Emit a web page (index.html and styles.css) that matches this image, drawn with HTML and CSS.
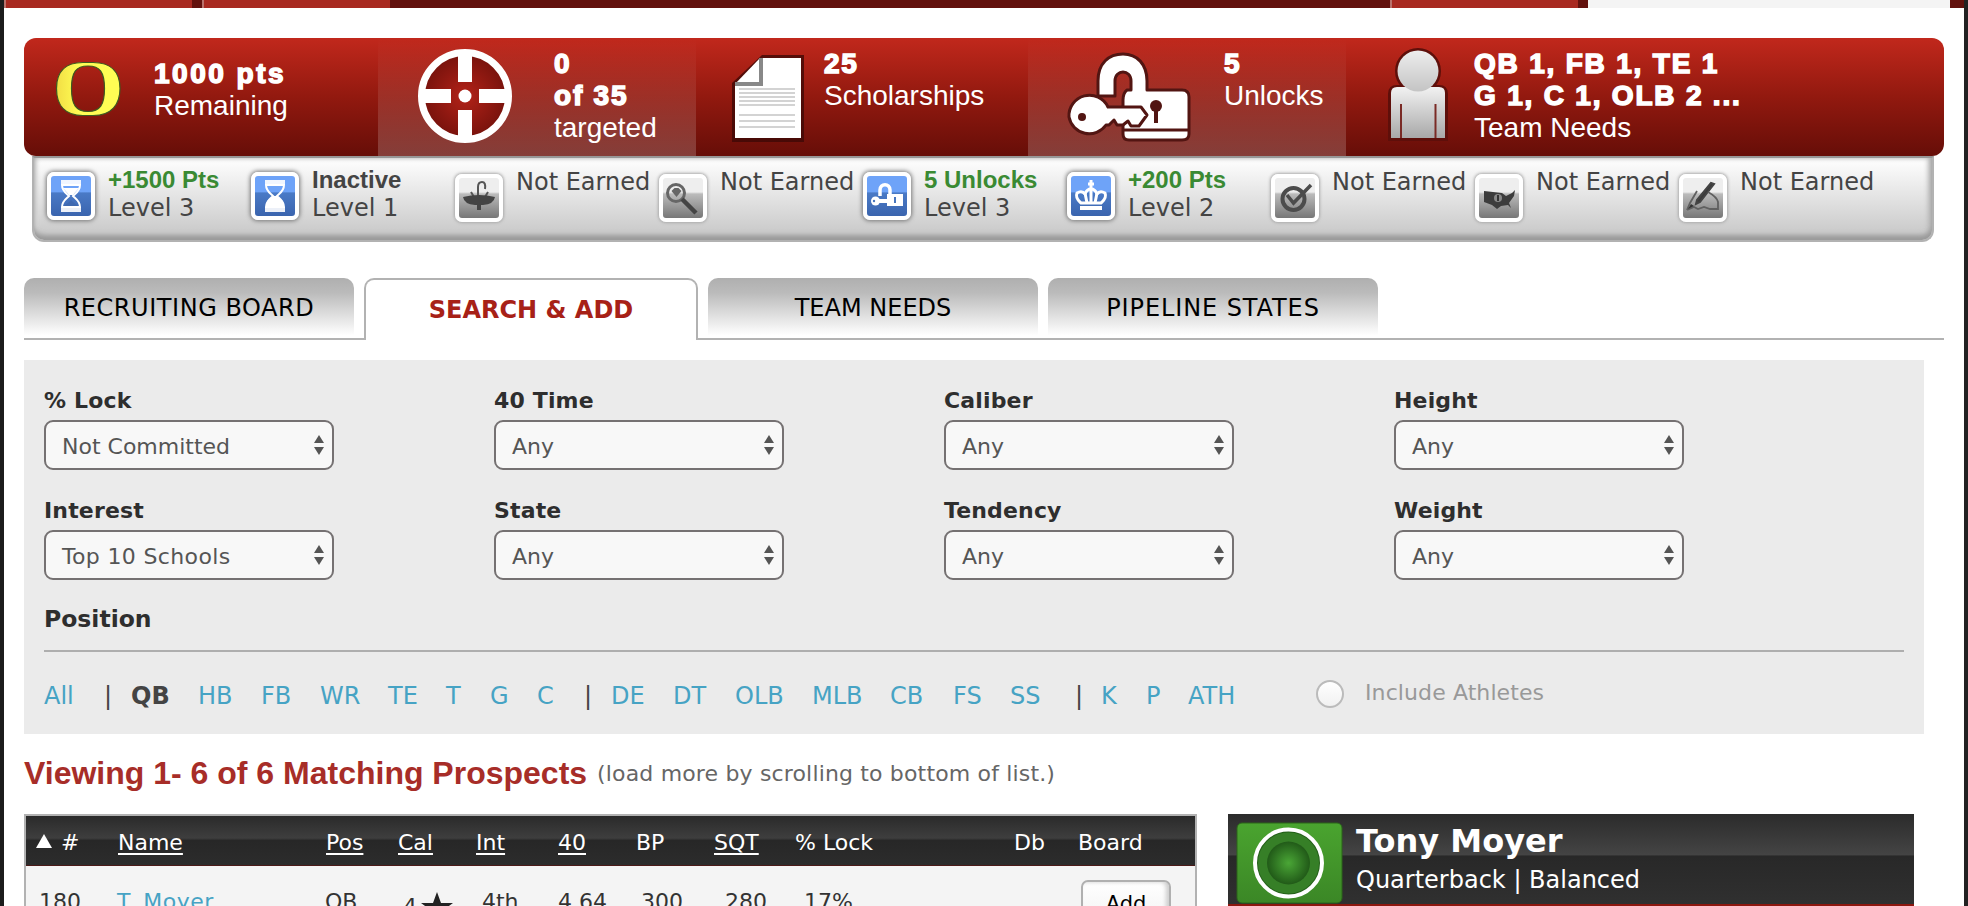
FILE: index.html
```html
<!DOCTYPE html>
<html lang="en">
<head>
<meta charset="utf-8">
<title>Recruiting</title>
<link rel="stylesheet" href="styles.css">
</head>
<body>
<svg class="defs" width="0" height="0">
  <defs>
    <linearGradient id="steel" x1="0" y1="0" x2="0" y2="1"><stop offset="0" stop-color="#f2f2f2"/><stop offset="1" stop-color="#a8a8a8"/></linearGradient>
    <linearGradient id="skin" x1="0" y1="0" x2="0" y2="1"><stop offset="0" stop-color="#ededed"/><stop offset="1" stop-color="#c4c4c4"/></linearGradient>
    <linearGradient id="yolk" x1="0" y1="0" x2="1" y2="0"><stop offset="0" stop-color="#f2de45"/><stop offset=".35" stop-color="#fffd54"/><stop offset="1" stop-color="#fffd54"/></linearGradient>
    <linearGradient id="turf" x1="0" y1="0" x2="0" y2="1"><stop offset="0" stop-color="#4aa42f"/><stop offset="1" stop-color="#3b8726"/></linearGradient>
    <radialGradient id="scope"><stop offset="0" stop-color="#b32218"/><stop offset="1" stop-color="#76120c"/></radialGradient>
    <radialGradient id="core"><stop offset="0" stop-color="#4aa636"/><stop offset="1" stop-color="#215a18"/></radialGradient>
  </defs>
</svg>
<div class="page">
  <div class="strip"><i class="s1"></i><i class="s2"></i><i class="s3"></i><i class="s4"></i></div>
  <main>
    <section class="summary">
      <div class="stat points">
        <svg class="logo" width="66" height="56" viewBox="0 0 66 56"><path fill-rule="evenodd" fill="url(#yolk)" stroke="#3d5a21" stroke-width="1.200" d="M28 1.500H38C57 1.500 65 12 65 27.500S57 54.500 38 54.500H28C9 54.500 1.500 43 1.500 27.500S9 1.500 28 1.500zM33 5C21 5 16.500 11 16.500 27.500S21 50.500 33 50.500 49.500 44 49.500 27.500 45 5 33 5z"/></svg>
        <p class="low"><b>1000 pts</b><br>Remaining</p>
      </div>
      <div class="stat light targets">
        <svg class="scope" width="98" height="98" viewBox="0 0 98 98"><circle cx="49" cy="49" r="43.500" fill="url(#scope)" stroke="#fff" stroke-width="7"/><path d="M49 5v30M49 63v30M5 49h30M63 49h30" stroke="#fff" stroke-width="14"/><circle cx="49" cy="49" r="6.500" fill="#fff"/></svg>
        <p><b>0<br>of 35</b><br>targeted</p>
      </div>
      <div class="stat grants">
        <svg class="doc" width="76" height="92" viewBox="0 0 76 92"><path d="M31 2H73V89H1V30z" fill="#3f0906" opacity=".8"/><path d="M29 5H70V85H4V31z" fill="#fff"/><path d="M30 5v26H4" fill="none" stroke="#888" stroke-width="4"/><path d="M8 36h56M8 40h56M8 44h56M8 48h56M8 52h56M8 62h56M8 68h56M8 74h56" stroke="#d3d3d3" stroke-width="2"/></svg>
        <p><b>25</b><br>Scholarships</p>
      </div>
      <div class="stat light unlocks">
        <svg class="lock" width="126" height="94" viewBox="-1 -1 126 94">
          <g fill="#fff" stroke="#521512" stroke-width="3" stroke-linejoin="round">
            <path d="M31 45V30C31 12 42 3 56 3s24 10 24 27v9h35q7 0 7 7v37q0 6-7 6H62q-6 0-6-6V49q0-7 4-10h4V30c0-12-16-12-16 0v15z"/>
            <path d="M56 79h66" fill="none"/>
            <path d="M2 66a20.500 20.500 0 0 1 39-10h33l6 8-8 11h-8l-3-5-5 4h-6l-3-5-5 5h-3A20.500 20.500 0 0 1 2 66z"/>
          </g>
          <circle cx="15" cy="66" r="4" fill="#521512"/><circle cx="89" cy="55" r="6" fill="#521512"/><path d="M89 56v16" stroke="#521512" stroke-width="4"/>
        </svg>
        <p><b>5</b><br>Unlocks</p>
      </div>
      <div class="stat needs">
        <svg class="man" width="64" height="100" viewBox="0 0 64 100"><g stroke="#5e0f0a" stroke-width="4"><path d="M4 92V47q0-7 7-7H53q7 0 7 7V92z"/><circle cx="32" cy="24" r="21"/></g><path d="M5 91V46q0-6 6-6H53q6 0 6 6V91z" fill="url(#steel)"/><path d="M15 57V91M49.500 57V91" stroke="#7a2a25" stroke-width="2"/><circle cx="32" cy="24" r="20.500" fill="url(#skin)"/></svg>
        <p><b>QB 1, FB 1, TE 1<br>G 1, C 1, OLB 2 ...</b><br>Team Needs</p>
      </div>
    </section>

    <section class="badges">
      <div class="badge on"><svg class="tile" viewBox="0 0 40 40"><path d="M10 4h20v4H10zM10 32h20v4H10z" fill="#fff" opacity=".9"/><path d="M11 9h18c0 6-4 8-7 11 3 3 7 5 7 11H11c0-6 4-8 7-11-3-3-7-5-7-11z" fill="none" stroke="#fff" stroke-width="2"/><path d="M12 12h16l-6 7h-4z" fill="#fff"/><path d="M18 26l2-2 2 2 5 4H13z" fill="#3f69b0"/></svg><p><b class="gain">+1500 Pts</b><br>Level 3</p></div>
      <div class="badge on"><svg class="tile" viewBox="0 0 40 40"><path d="M10 4h20v4H10zM10 32h20v4H10z" fill="#fff" opacity=".9"/><path d="M11 9h18c0 6-4 8-7 11 3 3 7 5 7 11H11c0-6 4-8 7-11-3-3-7-5-7-11z" fill="none" stroke="#fff" stroke-width="2"/><path d="M18 20h4l6 5v6H12v-6z" fill="#fff"/></svg><p><b>Inactive</b><br>Level 1</p></div>
      <div class="badge"><svg class="tile" viewBox="0 0 40 40"><path d="M19 20V9q0-5 4-5t3 7M12 14l3 5M29 14l-3 5" fill="none" stroke="#555" stroke-width="2"/><path d="M4 19q16-4 32 0-1 7-12 8h-2v5h-4v-5h-2Q5 26 4 19z" fill="#444"/></svg><p>Not Earned</p></div>
      <div class="badge"><svg class="tile" viewBox="0 0 40 40"><circle cx="13" cy="15" r="8.500" fill="none" stroke="#666" stroke-width="3"/><path d="M8.500 13l3-3h4l3 3-5 6z" fill="#666"/><path d="M19 21l14 14" stroke="#444" stroke-width="4.500"/></svg><p>Not Earned</p></div>
      <div class="badge on"><svg class="tile" viewBox="0 0 40 40"><path d="M13 20v-6c0-7 10-7 10 0v5" fill="none" stroke="#fff" stroke-width="3.500"/><path d="M20 18h16v12H20z" fill="#fff"/><circle cx="8.500" cy="25" r="4.500" fill="#fff"/><path d="M12 25h10" stroke="#fff" stroke-width="4"/><circle cx="7" cy="25" r="1.200" fill="#4775bd"/><path d="M28 21v6" stroke="#4775bd" stroke-width="2"/></svg><p><b class="gain">5 Unlocks</b><br>Level 3</p></div>
      <div class="badge on"><svg class="tile" viewBox="0 0 40 40"><path d="M10 27q-6-5-4-10 5-3 8 1 2-5 6-5t6 5q3-4 8-1 2 5-4 10z" fill="none" stroke="#fff" stroke-width="3"/><path d="M20 4v23M17 8h6M14 17l2 10M26 17l-2 10" stroke="#fff" stroke-width="3"/><path d="M9 30h22v4H9z" fill="#fff"/></svg><p><b class="gain">+200 Pts</b><br>Level 2</p></div>
      <div class="badge"><svg class="tile" viewBox="0 0 40 40"><circle cx="18.500" cy="21" r="11" fill="none" stroke="#4c4c4c" stroke-width="4"/><path d="M12 17l6.500 8L36 7" fill="none" stroke="#4c4c4c" stroke-width="3.500"/></svg><p>Not Earned</p></div>
      <div class="badge"><svg class="tile" viewBox="0 0 40 40"><path d="M5 13l18 2 4 3 6-3 3-3-1 6-5 7 2 5-3-3-7 1-4 3-5-4-8-3z" fill="#3c3c3c"/><circle cx="19" cy="20" r="4" fill="#888"/><path d="M19 17v6" stroke="#333" stroke-width="2"/></svg><p>Not Earned</p></div>
      <div class="badge"><svg class="tile" viewBox="0 0 40 40"><path d="M28 5L14 22l-1 4 4-2L31 6z" fill="#3a3a3a" stroke="#444" stroke-width="2"/><path d="M4 32l3-7 7-12M25 14q9 5 10 10v7h-8l-6-2-6 2-4-2-7 3" fill="none" stroke="#606060" stroke-width="1.800"/><path d="M5 31l3-5 3 2z" fill="#333"/></svg><p>Not Earned</p></div>
    </section>

    <nav class="tabs">
      <a class="tab board">RECRUITING BOARD</a><a class="tab active">SEARCH &amp; ADD</a><a class="tab">TEAM NEEDS</a><a class="tab pipeline">PIPELINE STATES</a>
    </nav>

    <section class="panel">
      <div class="filters">
        <div class="field"><label>% Lock</label><div class="select">Not Committed</div></div>
        <div class="field"><label>40 Time</label><div class="select">Any</div></div>
        <div class="field"><label>Caliber</label><div class="select">Any</div></div>
        <div class="field"><label>Height</label><div class="select">Any</div></div>
        <div class="field"><label>Interest</label><div class="select schools">Top 10 Schools</div></div>
        <div class="field"><label>State</label><div class="select">Any</div></div>
        <div class="field"><label>Tendency</label><div class="select">Any</div></div>
        <div class="field"><label>Weight</label><div class="select">Any</div></div>
      </div>
      <h3>Position</h3>
      <div class="positions">
        <a>All</a><i>|</i><b>QB</b><a>HB</a><a>FB</a><a>WR</a><a>TE</a><a>T</a><a>G</a><a>C</a><i>|</i><a>DE</a><a>DT</a><a>OLB</a><a>MLB</a><a>CB</a><a>FS</a><a>SS</a><i>|</i><a>K</a><a>P</a><a>ATH</a>
        <span class="radio"></span><span class="include">Include Athletes</span>
      </div>
    </section>

    <header class="heading"><h2>Viewing 1- 6 of 6 Matching Prospects</h2><span>(load more by scrolling to bottom of list.)</span></header>

    <div class="results">
      <div class="table">
        <div class="row head">
          <svg width="16" height="16" viewBox="0 0 16 16"><path d="M8 1l8 14H0z" fill="#fff"/></svg>
          <span>#</span><u>Name</u><u>Pos</u><u>Cal</u><u>Int</u><u>40</u><span>BP</span><u>SQT</u><span>% Lock</span><span>Db</span><span>Board</span>
        </div>
        <div class="row data">
          <span>180</span><a>T. Moyer</a><span>QB</span><span class="cal">4 <svg width="32" height="30" viewBox="0 0 32 30"><path d="M16 0l4 11h12l-9.500 7L26 29l-10-6.500L6 29l3.500-11L0 11h12z" fill="#222"/></svg></span><span>4th</span><span>4.64</span><span>300</span><span>280</span><span>17%</span><span class="add">Add</span>
        </div>
      </div>
      <aside class="player">
        <svg class="chip" width="108" height="84" viewBox="0 0 108 84"><rect x="1" y="1" width="105" height="80" rx="5" fill="url(#turf)" stroke="#2a6519" stroke-width="1"/><circle cx="52.500" cy="41" r="33.500" fill="#367f27"/><circle cx="52.500" cy="41" r="32" fill="none" stroke="#25611a" stroke-width="3"/><circle cx="52.500" cy="41" r="33.500" fill="none" stroke="#fff" stroke-width="4"/><circle cx="52.500" cy="41" r="21.500" fill="url(#core)"/></svg>
        <div><h4>Tony Moyer</h4><p>Quarterback | Balanced</p></div>
      </aside>
    </div>
  </main>
</div>
</body>
</html>
```
FILE: styles.css
```css
* { box-sizing: border-box; }
html, body { margin: 0; height: 906px; overflow: hidden; }
body { font-family: "DejaVu Sans", Verdana, sans-serif; font-size: 22px; background: #fff; color: #333; }
p, h2, h3, h4 { margin: 0; }
i { font-style: normal; }
.defs { position: absolute; }
.page { height: 906px; overflow: hidden; border-left: 4px solid #1c1c1c; border-right: 4px solid #222; }

.strip { display: flex; height: 8px; background: #62110d; }
.strip i { background: #a82920; border-left: 2px solid #b9716b; }
.strip .s1 { width: 188px; margin-right: 10px; }
.strip .s2 { width: 188px; margin-right: 1000px; }
.strip .s3 { width: 188px; margin-right: 10px; }
.strip .s4 { width: 362px; background: #f4f4f4; border: 0; }

main { padding: 30px 20px 0; }

.summary { display: grid; grid-template-columns: 354px 318px 332px 318px 598px; height: 118px; border-radius: 12px; overflow: hidden; background: linear-gradient(#c1281c, #92190f 50%, #670e08 99%); color: #fff; font-family: "Liberation Sans", Arial, sans-serif; font-size: 28px; line-height: 32px; }
.stat { display: flex; align-items: flex-start; padding-top: 10px; white-space: nowrap; }
.stat p { padding-top: 0; }
.stat b { letter-spacing: 1.8px; -webkit-text-stroke: 1.5px #fff; }
.light { background: linear-gradient(rgba(255,255,255,0), rgba(255,255,255,.2)); }
.logo { margin: 13px 33px 0 31px; }
.stat .low { padding-top: 10px; }
.low b { letter-spacing: 2.5px; }
.scope { margin: -1px 40px 0 38px; }
.doc { margin: 5px 17px 0 35px; }
.lock { margin: 2px 32px 0 38px; }
.man { margin: -1px 24px 0 40px; }

.badges { display: grid; grid-template-columns: repeat(9, 204px); width: 1902px; height: 86px; margin-left: 8px; padding: 7px 0 0 10px; border: 2px solid #b2b2b2; border-top-color: #979797; border-radius: 0 0 12px 12px; background: linear-gradient(#fff, #ccc 88%); box-shadow: inset 0 -5px 5px #999, inset -4px 0 5px #bbb, inset 3px 0 4px #ddd; font-size: 24px; line-height: 28px; color: #444; }
.badge { display: flex; align-items: flex-start; gap: 13px; padding-top: 3px; white-space: nowrap; }
.badge b { font-family: "Liberation Sans", Arial, sans-serif; font-size: 24px; }
.badge .gain { color: #3a8a33; }
.tile { flex: none; width: 48px; height: 48px; margin: 6px 0 0 3px; border: 4px solid #fff; border-radius: 7px; box-shadow: 0 0 3px 1px #aaa; background: linear-gradient(#eee 35%, #bbb 40%, #777); }
.on { padding-top: 1px; }
.on .tile { margin-top: 6px; background: linear-gradient(#6ea3f8 40%, #4a7ac6 42%, #3a64ae); box-shadow: 0 0 4px 1px #777; }

.tabs { display: flex; gap: 10px; height: 62px; margin-top: 36px; border-bottom: 2px solid #b2b2b2; font-size: 24px; line-height: 60px; text-align: center; }
.tab { width: 330px; height: 59px; border-radius: 10px 10px 0 0; background: linear-gradient(#afafaf, #bbb 25%, #fff 97%); }
.board { letter-spacing: .55px; }
.pipeline { letter-spacing: .9px; }
.active { width: 334px; height: 62px; border: 2px solid #b2b2b2; border-bottom: 0; background: #fff; font-weight: bold; }

.panel { width: 1900px; height: 374px; margin-top: 20px; padding: 20px 20px 0; background: #ebebeb; }
.filters { display: grid; grid-template-columns: repeat(4, 450px); row-gap: 20px; }
label, h3 { display: block; height: 40px; line-height: 41px; font-size: 22px; font-weight: bold; color: #2e2e2e; }
label { letter-spacing: .15px; }
.select { width: 290px; height: 50px; padding: 0 8px 0 16px; border: 2px solid #757172; border-radius: 9px; background: #f8f8f8; color: #555; line-height: 49px; display: flex; justify-content: space-between; }
.schools { letter-spacing: .35px; }
.select::after { content: ""; width: 10px; height: 20px; margin-top: 13px; background: #555; clip-path: polygon(50% 0, 100% 40%, 0 40%, 0 60%, 100% 60%, 50% 100%, 0 60%, 0 40%); }
h3 { margin-top: 20px; height: 52px; border-bottom: 2px solid #aeaeae; font-size: 23.500px; line-height: 39px; }
.positions { display: grid; grid-template-columns: 60px 27px 67px 63px 59px 68px 58px 44px 47px 47px 27px 62px 62px 77px 78px 63px 57px 65px 26px 45px 42px 128px 49px 200px; line-height: 89px; font-size: 24px; color: #444; white-space: nowrap; }
a { color: #46a3c4; }
.tabs .tab { color: #000; }
.tabs .active { color: #a72117; }
.radio { width: 28px; height: 28px; margin-top: 28px; border: 2px solid #bbb; border-radius: 50%; background: linear-gradient(#fff, #f1f1f1); }
.include { font-size: 22px; line-height: 81px; letter-spacing: .1px; color: #999; }

.heading { display: flex; align-items: flex-start; gap: 10px; height: 80px; white-space: nowrap; color: #666; }
.heading span { line-height: 80px; letter-spacing: .16px; }
h2 { font: bold 32px/78px "Liberation Sans", Arial, sans-serif; color: #a72d28; }

.results { display: flex; gap: 31px; }
.table { width: 1173px; height: 110px; border: 2px solid #b2b2b2; border-bottom: 0; background: #f4f4f4; }
.row { display: grid; white-space: nowrap; }
.head { grid-template-columns: 25px 57px 208px 72px 78px 82px 78px 78px 81px 219px 64px 90px; height: 50px; padding-left: 10px; background: linear-gradient(#2a2a2a, #3e3e3e 45%, #272727 50%, #2c2c2c); border-bottom: 1px solid #4c1a18; color: #fff; line-height: 53px; }
.head svg { margin-top: 17px; }
.head u { text-decoration-thickness: 2px; text-underline-offset: 3px; }
.data { grid-template-columns: 78px 208px 78px 79px 76px 83px 84px 79px 277px 90px; padding-left: 13px; line-height: 72px; height: 58px; }
.data a { letter-spacing: .5px; }
.cal { display: flex; gap: 4px; padding-top: 5px; }
.cal svg { margin-top: 21px; }
.add { width: 90px; height: 60px; margin-top: 14px; border: 2px solid #b0b0b0; border-radius: 7px; background: linear-gradient(#fff, #eee); box-shadow: inset -3px 0 4px #ccc; color: #000; line-height: 44px; text-align: center; font-size: 21px; }
.player { display: flex; gap: 12px; width: 686px; height: 92px; padding: 8px; border-bottom: 2px solid #8c170f; background: linear-gradient(#2b2b2b, #444 45%, #282828 47%, #303030); color: #fff; white-space: nowrap; }
h4 { font-size: 32px; line-height: 38px; }
.player p { font-size: 24px; line-height: 40px; }
```
